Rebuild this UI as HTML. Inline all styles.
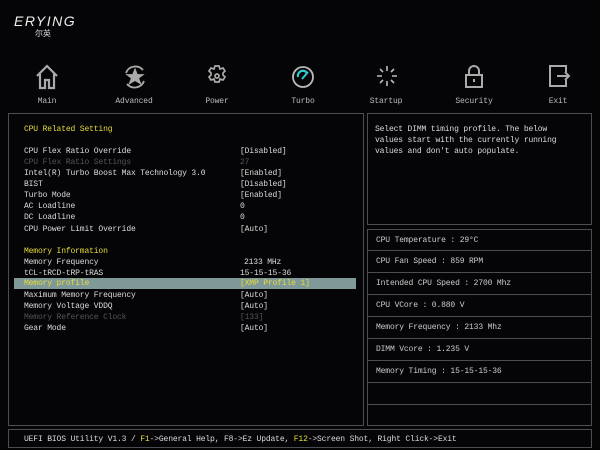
<!DOCTYPE html>
<html><head><meta charset="utf-8"><style>
*{margin:0;padding:0;box-sizing:border-box}
body{width:600px;height:450px;background:#050507;position:relative;overflow:hidden;font-family:"Liberation Mono",monospace;font-size:8px;letter-spacing:-0.15px;color:#dcdcdc}
.a{position:absolute;white-space:pre;line-height:11px}
.box{position:absolute;border:1px solid #4a4d52}
.y{color:#e6dc3c}
.g{color:#555}
.lbl{position:absolute;top:97px;width:80px;text-align:center;color:#bbb;font-size:8px}
.ic{position:absolute;top:64px}
.row{position:absolute;left:367px;width:225px;height:22px;border:1px solid #4a4d52;border-top:none;padding-left:8px;line-height:22px;color:#ccc}
</style></head><body>
<div class="a" style="left:14px;top:13px;font-family:'Liberation Sans',sans-serif;font-style:italic;font-size:14px;letter-spacing:1.5px;color:#eee;line-height:16px">ERYING</div>
<div class="a" style="left:35px;top:28px;font-family:'Noto Sans CJK SC',sans-serif;font-size:8px;color:#ddd">尔英</div>

<svg class="ic" style="left:35px" width="24" height="26" viewBox="0 0 24 26" fill="none" stroke="#aaa" stroke-width="2.2"><path d="M2 12 L12 2 L22 12 M5 10 V24 H10 V16 H14 V24 H19 V10"/></svg>
<svg class="ic" style="left:122px" width="26" height="26" viewBox="0 0 26 26" fill="none" stroke="#aaa" stroke-width="1.8"><path d="M4 9 A10 10 0 0 1 21 6 M22 17 A10 10 0 0 1 5 20"/><path d="M13 6 L15 11 L20 11 L16 14 L18 19 L13 16 L8 19 L10 14 L6 11 L11 11Z" fill="#aaa"/></svg>
<svg class="ic" style="left:205px" width="24" height="24" viewBox="0 0 24 24" fill="none" stroke="#aaa" stroke-width="1.7"><path d="M10 2h4l1 3 3-1 2 3-2 2 0 2 2 2-2 3-3-1-1 3h-4l-1-3-3 1-2-3 2-2v-2l-2-2 2-3 3 1z"/><circle cx="12" cy="12" r="2"/></svg>
<svg class="ic" style="left:290px" width="26" height="26" viewBox="0 0 26 26" fill="none"><circle cx="13" cy="13" r="10" stroke="#bbb" stroke-width="1.8"/><path d="M8 13 A5 5 0 0 1 17 9" stroke="#3cc" stroke-width="2.2"/><path d="M12 15 L18 8" stroke="#3cc" stroke-width="2"/></svg>
<svg class="ic" style="left:375px" width="24" height="24" viewBox="0 0 24 24" stroke="#bbb" stroke-width="1.6"><path d="M12 2v5M12 17v5M2 12h5M17 12h5M5 5l3 3M16 16l3 3M19 5l-3 3M8 16l-3 3"/></svg>
<svg class="ic" style="left:464px" width="20" height="26" viewBox="0 0 20 26" fill="none" stroke="#aaa" stroke-width="2"><path d="M5 11V7a5 5 0 0 1 10 0v4"/><rect x="2" y="11" width="16" height="12"/><path d="M10 15v3"/></svg>
<svg class="ic" style="left:548px" width="24" height="24" viewBox="0 0 24 24" fill="none" stroke="#aaa" stroke-width="2"><path d="M18 8V2H2v20h16v-6M9 12h12M17 8l4 4-4 4"/></svg>
<div class="lbl" style="left:7px">Main</div>
<div class="lbl" style="left:94px">Advanced</div>
<div class="lbl" style="left:177px">Power</div>
<div class="lbl" style="left:263px">Turbo</div>
<div class="lbl" style="left:346px">Startup</div>
<div class="lbl" style="left:434px">Security</div>
<div class="lbl" style="left:518px">Exit</div>

<div class="box" style="left:8px;top:113px;width:356px;height:313px"></div>
<div class="box" style="left:367px;top:113px;width:225px;height:112px"></div>
<div class="box" style="left:8px;top:429px;width:584px;height:19px"></div>
<div style="position:absolute;left:14px;top:278px;width:342px;height:11px;background:#7f9999"></div>

<div class="a y" style="left:24px;top:124px">CPU Related Setting</div>
<div class="a" style="left:24px;top:146px">CPU Flex Ratio Override</div><div class="a" style="left:240px;top:146px">[Disabled]</div>
<div class="a g" style="left:24px;top:157px">CPU Flex Ratio Settings</div><div class="a g" style="left:240px;top:157px">27</div>
<div class="a" style="left:24px;top:168px">Intel(R) Turbo Boost Max Technology 3.0</div><div class="a" style="left:240px;top:168px">[Enabled]</div>
<div class="a" style="left:24px;top:179px">BIST</div><div class="a" style="left:240px;top:179px">[Disabled]</div>
<div class="a" style="left:24px;top:190px">Turbo Mode</div><div class="a" style="left:240px;top:190px">[Enabled]</div>
<div class="a" style="left:24px;top:201px">AC Loadline</div><div class="a" style="left:240px;top:201px">0</div>
<div class="a" style="left:24px;top:212px">DC Loadline</div><div class="a" style="left:240px;top:212px">0</div>
<div class="a" style="left:24px;top:224px">CPU Power Limit Override</div><div class="a" style="left:240px;top:224px">[Auto]</div>
<div class="a y" style="left:24px;top:246px">Memory Information</div>
<div class="a" style="left:24px;top:257px">Memory Frequency</div><div class="a" style="left:244px;top:257px">2133 MHz</div>
<div class="a" style="left:24px;top:268px">tCL-tRCD-tRP-tRAS</div><div class="a" style="left:240px;top:268px">15-15-15-36</div>
<div class="a y" style="left:24px;top:278px">Memory profile</div><div class="a y" style="left:240px;top:278px">[XMP Profile 1]</div>
<div class="a" style="left:24px;top:290px">Maximum Memory Frequency</div><div class="a" style="left:240px;top:290px">[Auto]</div>
<div class="a" style="left:24px;top:301px">Memory Voltage VDDQ</div><div class="a" style="left:240px;top:301px">[Auto]</div>
<div class="a g" style="left:24px;top:312px">Memory Reference Clock</div><div class="a g" style="left:240px;top:312px">[133]</div>
<div class="a" style="left:24px;top:323px">Gear Mode</div><div class="a" style="left:240px;top:323px">[Auto]</div>

<div class="a" style="left:375px;top:124px">Select DIMM timing profile. The below
values start with the currently running
values and don't auto populate.</div>

<div class="row" style="top:229px;border-top:1px solid #4a4d52">CPU Temperature : 29°C</div>
<div class="row" style="top:251px">CPU Fan Speed : 859 RPM</div>
<div class="row" style="top:273px">Intended CPU Speed : 2700 Mhz</div>
<div class="row" style="top:295px">CPU VCore : 0.880 V</div>
<div class="row" style="top:317px">Memory Frequency : 2133 Mhz</div>
<div class="row" style="top:339px">DIMM Vcore : 1.235 V</div>
<div class="row" style="top:361px">Memory Timing : 15-15-15-36</div>
<div class="row" style="top:383px"></div>
<div class="row" style="top:405px;height:21px"></div>

<div class="a" style="left:24px;top:434px">UEFI BIOS Utility V1.3 / <span class="y">F1</span>-&gt;General Help, F8-&gt;Ez Update, <span class="y">F12</span>-&gt;Screen Shot, Right Click-&gt;Exit</div>
</body></html>
